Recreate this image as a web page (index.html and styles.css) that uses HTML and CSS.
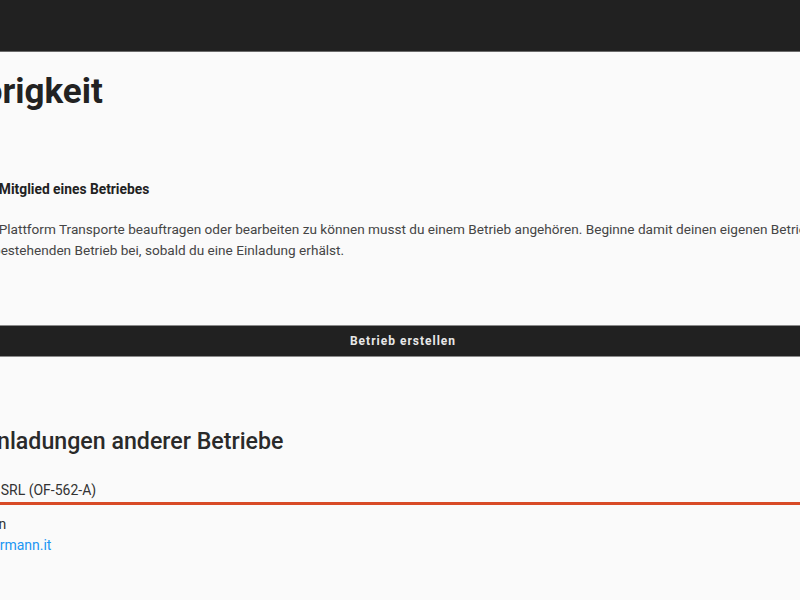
FILE: index.html
```html
<!DOCTYPE html>
<html lang="de">
<head>
<meta charset="utf-8">
<title>Betriebszugehörigkeit</title>
<link rel="stylesheet" href="styles.css">
</head>
<body>
<header class="topbar"></header>
<main class="content">
  <h1 class="page-title">Betriebszugehörigkeit</h1>
  <section class="membership">
    <h2 class="notice-title">Kein Mitglied eines Betriebes</h2>
    <p class="notice-text">
      <span class="line line-1">Um die Plattform Transporte beauftragen oder bearbeiten zu können musst du einem Betrieb angehören. Beginne damit deinen eigenen Betrieb zu erstellen oder tritt einem</span>
      <span class="line line-2">bestehenden Betrieb bei, sobald du eine Einladung erhälst.</span>
    </p>
  </section>
  <button class="create-btn" type="button">Betrieb erstellen</button>
  <section class="invites">
    <h2 class="invites-title">Einladungen anderer Betriebe</h2>
    <div class="invite">
      <div class="invite-head">Mustermann SRL (OF-562-A)</div>
      <div class="invite-body">
        <div class="invite-label">Eingeladen von</div>
        <a class="invite-mail" href="#">max@mustermann.it</a>
      </div>
    </div>
  </section>
</main>
</body>
</html>
```

FILE: styles.css
```css
html, body {
  margin: 0;
  padding: 0;
}
body {
  background: #fafafa;
  font-family: Roboto, "Liberation Sans", sans-serif;
  color: #222;
  overflow: hidden;
  width: 800px;
  height: 600px;
}
.topbar {
  height: 51px;
  background: #212121;
  border-bottom: 1px solid #6a6a6a;
}
.content {
  margin-left: -22px;
  width: 850px;
}
.page-title {
  margin: 20px 0 0 -223px;
  font-size: 35px;
  line-height: 40px;
  font-weight: 700;
  color: #222;
  white-space: nowrap;
}
.membership {
  margin-top: 68px;
}
.notice-title {
  margin: 0 0 0 -10px;
  font-size: 13.8px;
  line-height: 18px;
  font-weight: 700;
  color: #222;
}
.notice-text {
  margin: 21px 0 0 0;
  font-size: 13.6px;
  line-height: 21px;
  color: #454545;
}
.line {
  display: block;
  white-space: nowrap;
}
.line-1 {
  margin-left: -25px;
}
.line-2 {
  margin-left: 15px;
}
.create-btn {
  display: block;
  width: 100%;
  margin-top: 64px;
  height: 32px;
  background: #212121;
  color: #e8e8e8;
  border: 0;
  border-top: 1px solid #8a8a8a;
  border-bottom: 1px solid #8a8a8a;
  font-family: Roboto, "Liberation Sans", sans-serif;
  font-size: 12px;
  font-weight: 700;
  letter-spacing: 1px;
}
.invites {
  margin-top: 69px;
}
.invites-title {
  margin: 0;
  font-size: 23.2px;
  line-height: 30px;
  font-weight: 500;
  color: #2a2a2a;
}
.invite {
  margin-top: 23px;
}
.invite-head {
  margin-left: -60px;
  font-size: 14px;
  line-height: 22px;
  color: #333;
  padding-bottom: 1px;
  border-bottom: 3px solid #d84a26;
}
.invite-body {
  padding-top: 9px;
  font-size: 14px;
  line-height: 21px;
}
.invite-label {
  margin-left: -66px;
  color: #333;
}
.invite-mail {
  display: block;
  margin-left: -57px;
  color: #2196f3;
  text-decoration: none;
}
```
